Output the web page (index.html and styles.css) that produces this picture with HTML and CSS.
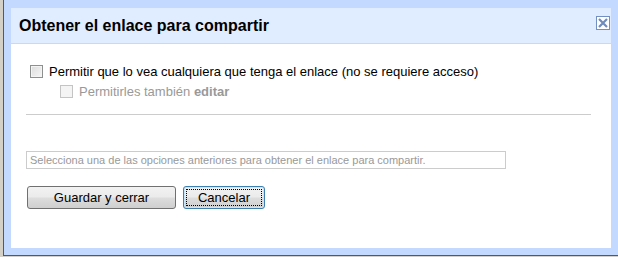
FILE: index.html
```html
<!DOCTYPE html>
<html lang="es">
<head>
<meta charset="utf-8">
<title>Obtener el enlace para compartir</title>
<link rel="stylesheet" href="styles.css">
</head>
<body>
<div class="screen">
  <div class="dialog">
    <div class="header">
      <h1 class="title">Obtener el enlace para compartir</h1>
      <button class="close" aria-label="Cerrar">
        <svg width="10" height="10" viewBox="0 0 10 10"><path d="M1 1L9 9M9 1L1 9" stroke="#6f8cbd" stroke-width="2.2" fill="none"/></svg>
      </button>
    </div>
    <div class="content">
      <label class="opt">
        <input type="checkbox" class="cb">
        <span>Permitir que lo vea cualquiera que tenga el enlace (no se requiere acceso)</span>
      </label>
      <label class="opt sub disabled">
        <input type="checkbox" class="cb" disabled>
        <span>Permitirles también <b>editar</b></span>
      </label>
      <hr class="sep">
      <input class="link" type="text" readonly placeholder="Selecciona una de las opciones anteriores para obtener el enlace para compartir.">
      <div class="buttons">
        <button class="btn save">Guardar y cerrar</button>
        <button class="btn cancel"><span class="focus">Cancelar</span></button>
      </div>
    </div>
  </div>
</div>
</body>
</html>
```
FILE: styles.css
```css
html, body {
  margin: 0;
  padding: 0;
}
body {
  background: #d4d0c8;
  font-family: "Liberation Sans", Arial, sans-serif;
  width: 618px;
  height: 257px;
  overflow: hidden;
}
.screen {
  margin-left: 3px;
  border-left: 1px solid #4a5a70;
  border-bottom: 1px solid #4a5a70;
  background: #c3d9ff;
  height: 256px;
  box-sizing: border-box;
  padding: 8px 7px 0 7px;
}
.dialog {
  background: #fff;
  width: 600px;
  height: 240px;
  display: flex;
  flex-direction: column;
}
.header {
  background: #e0ecff;
  height: 35px;
  border-bottom: 1px solid #c3d9ff;
  display: flex;
  align-items: flex-start;
  justify-content: space-between;
  padding: 0 1px 0 8px;
}
.title {
  margin: 0;
  font-size: 16px;
  font-weight: bold;
  color: #000;
  line-height: 18px;
  padding-top: 9px;
}
.close {
  margin-top: 8px;
  width: 14px;
  height: 14px;
  padding: 0;
  border: 1px solid #7390c2;
  background: #fff;
  display: flex;
  align-items: center;
  justify-content: center;
}
.close svg { display: block; }
.content {
  padding: 20px 20px 0 15px;
  display: flex;
  flex-direction: column;
}
.opt {
  display: flex;
  align-items: center;
  font-size: 13px;
  color: #000;
  height: 14px;
  padding-left: 4px;
  gap: 6px;
}
.opt.sub {
  margin-top: 6px;
  padding-left: 34px;
}
.opt.disabled { color: #999; }
.cb {
  -webkit-appearance: none;
  appearance: none;
  margin: 0;
  width: 13px;
  height: 13px;
  border: 1px solid #8e8f8f;
  background: linear-gradient(135deg, #dcdcdc 0%, #f6f6f6 100%);
  box-shadow: inset 0 0 0 1px #f4f4f4;
  box-sizing: border-box;
  flex: none;
}
.cb:disabled {
  border-color: #c4c4c4;
  background: #f4f4f4;
  box-shadow: none;
}
.sep {
  margin: 16px 0 0 0;
  border: 0;
  border-top: 1px solid #cccccc;
  width: 565px;
  height: 0;
}
.link {
  margin-top: 36px;
  width: 480px;
  height: 18px;
  box-sizing: border-box;
  border: 1px solid #cccccc;
  padding: 0 3px;
  font-family: "Liberation Sans", Arial, sans-serif;
  font-size: 11px;
  outline: none;
}
.link::placeholder { color: #999; }
.buttons {
  margin-top: 17px;
  display: flex;
  gap: 7px;
  padding-left: 1px;
}
.btn {
  height: 23px;
  box-sizing: border-box;
  border: 1px solid #707070;
  border-radius: 3px;
  background: linear-gradient(#f2f2f2 0%, #ebebeb 48%, #dddddd 52%, #cfcfcf 100%);
  font-family: "Liberation Sans", Arial, sans-serif;
  font-size: 13px;
  color: #000;
  padding: 0;
}
.save { width: 149px; }
.cancel {
  width: 82px;
  border-color: #3c7fb1;
  box-shadow: inset 0 0 0 1px #c8e6f8;
  padding: 2px;
  display: flex;
}
.focus {
  flex: 1;
  border: 1px dotted #000;
  display: flex;
  align-items: center;
  justify-content: center;
}
```
